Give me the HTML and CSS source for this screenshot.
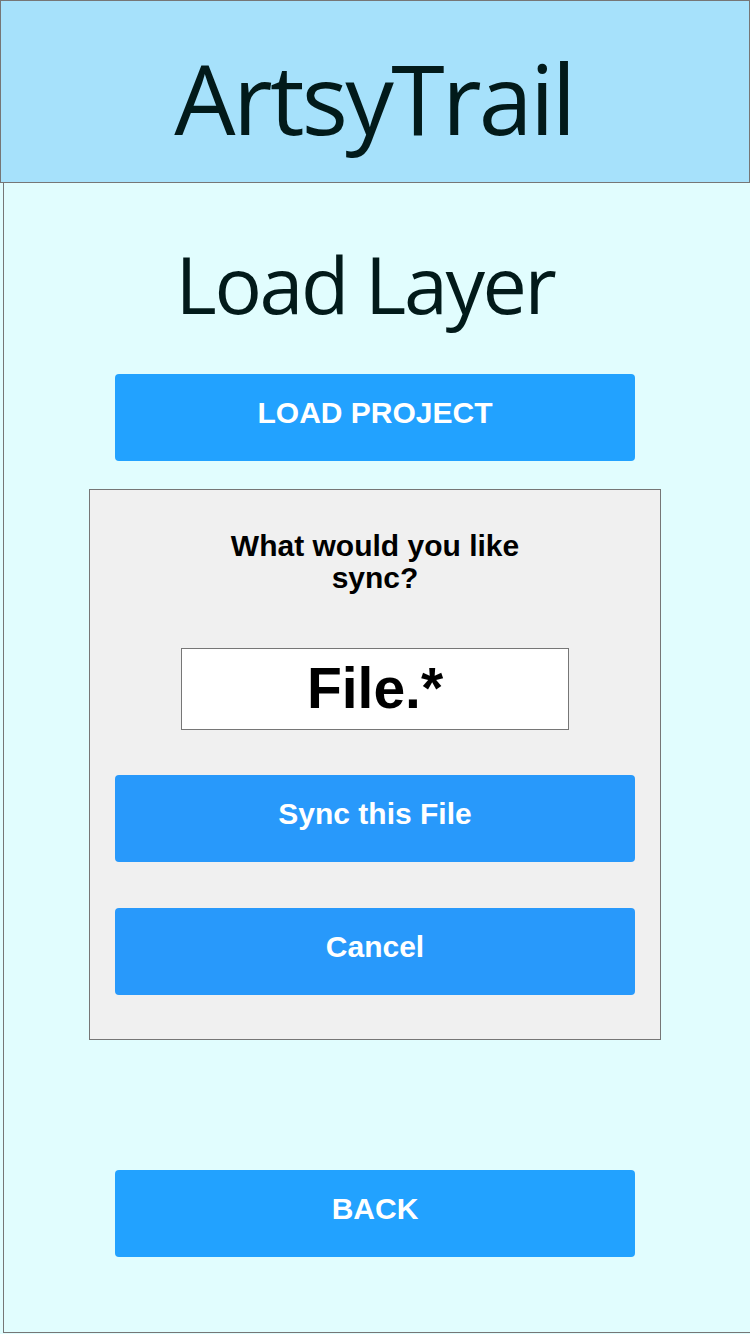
FILE: index.html
```html
<!DOCTYPE html>
<html lang="en">
<head>
<meta charset="utf-8">
<title>ArtsyTrail - Load Layer</title>
<link rel="stylesheet" href="styles.css">
</head>
<body>
<header class="app-header">
  <h1 class="app-title">ArtsyTrail</h1>
</header>
<main class="screen">
  <h2 class="page-title">Load Layer</h2>
  <button class="btn btn-primary btn-load">LOAD PROJECT</button>
  <section class="dialog">
    <p class="dialog-question">What would you like<br>sync?</p>
    <div class="file-box">File.*</div>
    <button class="btn btn-dialog">Sync this File</button>
    <button class="btn btn-dialog">Cancel</button>
  </section>
  <button class="btn btn-primary btn-back">BACK</button>
</main>
</body>
</html>
```

FILE: styles.css
```css
html, body {
  margin: 0;
  padding: 0;
}
body {
  width: 750px;
  height: 1334px;
  background: #e1fdfe;
  overflow: hidden;
  font-family: "Liberation Sans", Arial, sans-serif;
}
.app-header {
  box-sizing: border-box;
  width: 750px;
  height: 183px;
  background: #a6e1fb;
  border: 1px solid #767676;
  display: flex;
  justify-content: center;
  align-items: flex-start;
}
.app-title {
  margin: 36px 2px 0 0;
  font-family: "Open Sans", sans-serif;
  font-weight: 400;
  font-size: 97px;
  line-height: 120px;
  letter-spacing: -2.7px;
  color: #021a1a;
}
.screen {
  box-sizing: border-box;
  width: 747px;
  height: 1150px;
  margin-left: 3px;
  padding-right: 4px;
  border-left: 1px solid #767676;
  border-bottom: 1px solid #767676;
  display: flex;
  flex-direction: column;
  align-items: center;
}
.page-title {
  margin: 51px 20px 0 0;
  font-family: "Open Sans", sans-serif;
  font-weight: 400;
  font-size: 79px;
  line-height: 100px;
  letter-spacing: -2.4px;
  color: #021a1a;
  height: 100px;
}
.btn {
  box-sizing: border-box;
  width: 520px;
  height: 87px;
  border: 0;
  border-radius: 4px;
  color: #ffffff;
  font-family: "Liberation Sans", Arial, sans-serif;
  font-weight: 700;
  font-size: 30px;
  display: flex;
  justify-content: center;
  align-items: center;
  padding: 0 0 10px 0;
  margin: 0;
}
.btn-primary {
  background: #22a2ff;
}
.btn-load {
  margin-top: 40px;
}
.dialog {
  box-sizing: border-box;
  width: 572px;
  height: 551px;
  margin-top: 28px;
  background: #f0f0f0;
  border: 1px solid #767676;
  display: flex;
  flex-direction: column;
  align-items: center;
  padding-top: 40px;
}
.dialog-question {
  margin: 0;
  font-family: "Liberation Sans", Arial, sans-serif;
  font-weight: 700;
  font-size: 30px;
  line-height: 32px;
  text-align: center;
  color: #000000;
}
.file-box {
  box-sizing: border-box;
  width: 388px;
  height: 82px;
  margin-top: 54px;
  background: #ffffff;
  border: 1px solid #767676;
  display: flex;
  justify-content: center;
  align-items: center;
  font-family: "Liberation Sans", Arial, sans-serif;
  font-weight: 700;
  font-size: 57px;
  color: #000000;
  padding-bottom: 2px;
}
.btn-dialog {
  background: #2899fb;
  margin-top: 45px;
}
.btn-dialog + .btn-dialog {
  margin-top: 46px;
}
.btn-back {
  margin-top: 130px;
}
```
